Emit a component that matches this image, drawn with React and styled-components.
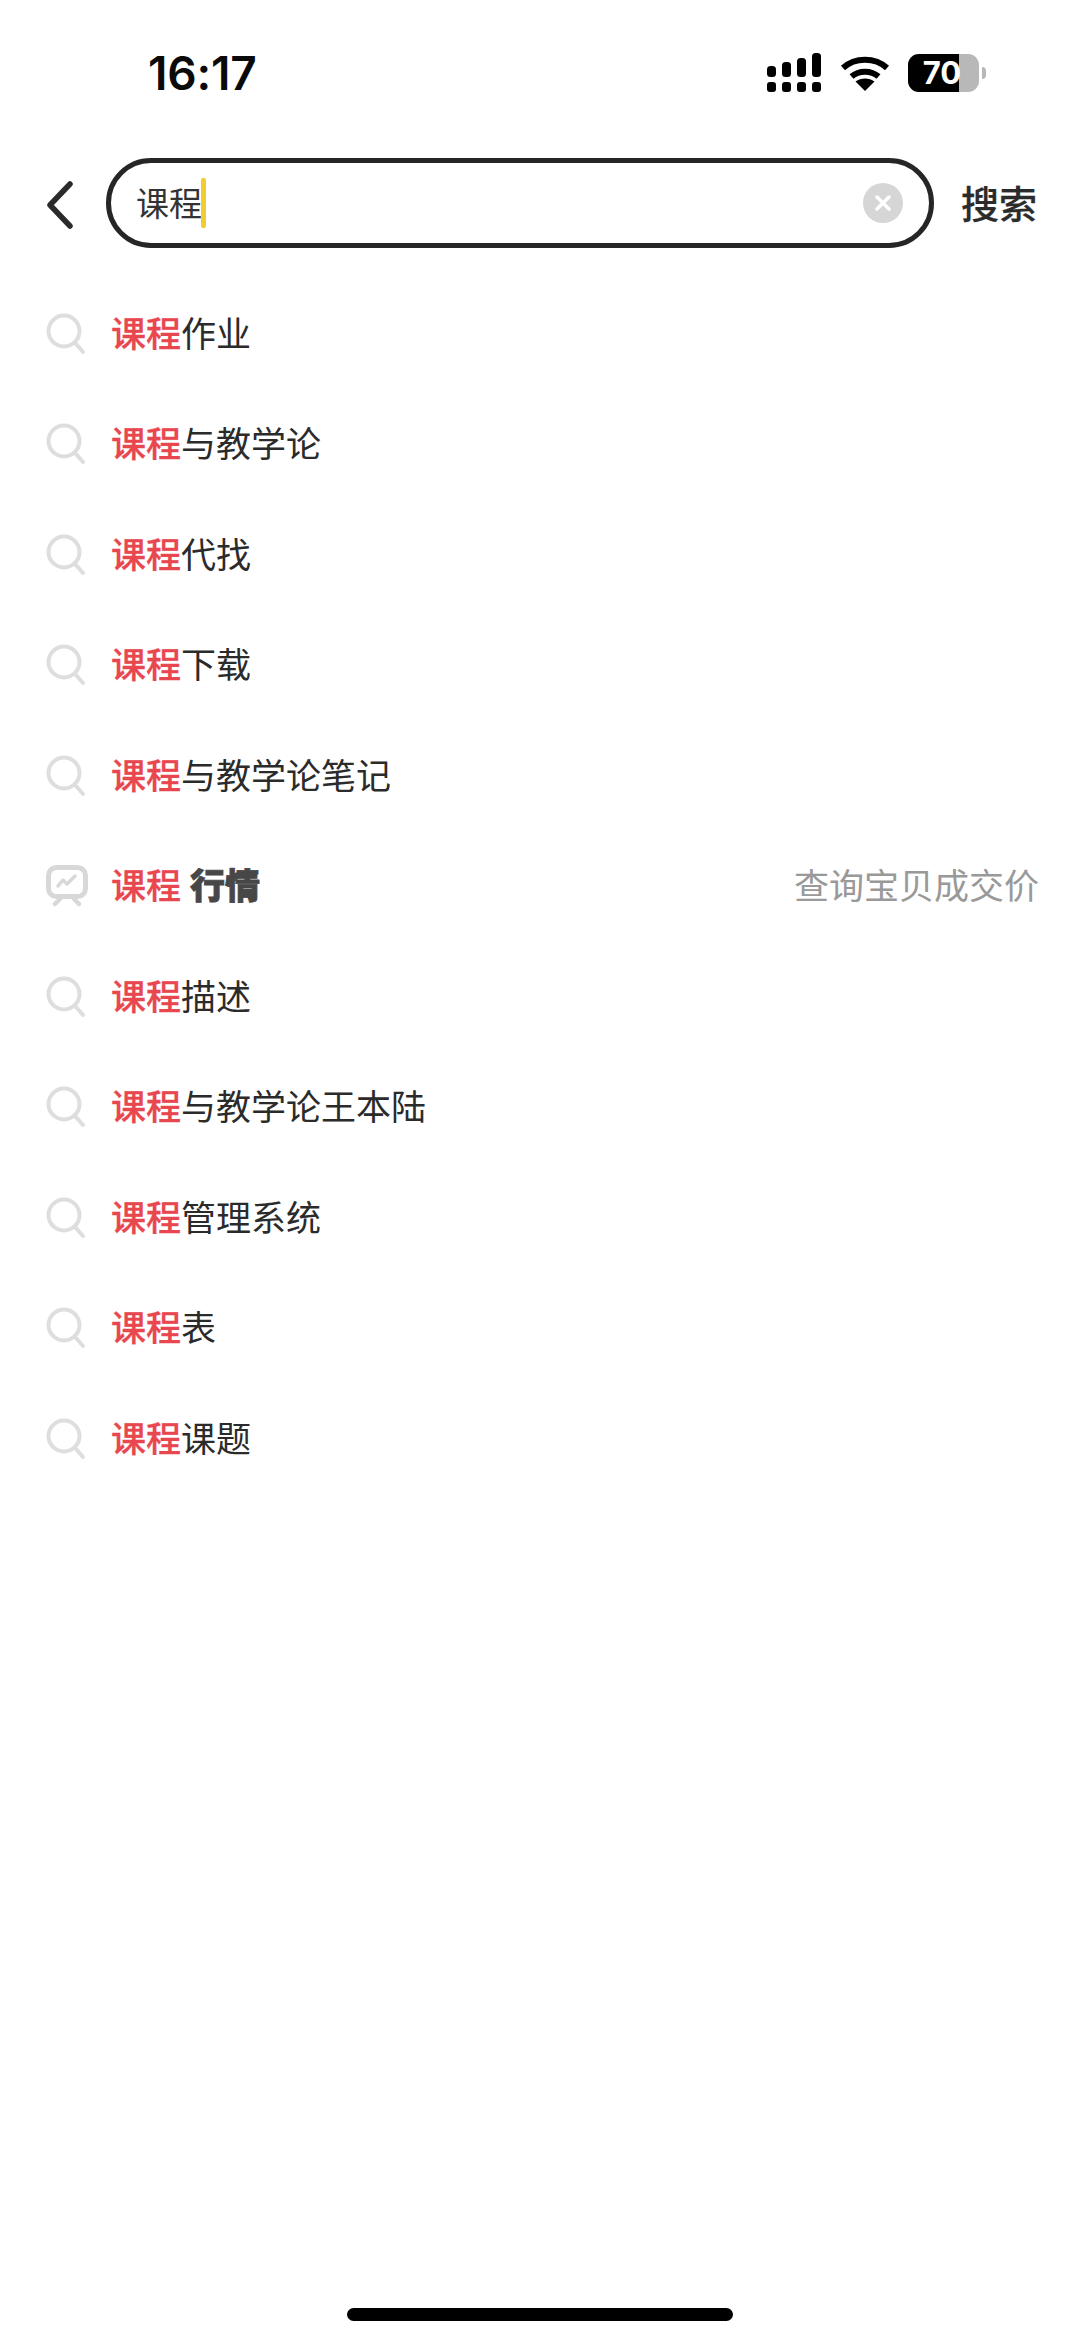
import React from "react"
import styled, {createGlobalStyle} from "styled-components"

const GlobalStyle = createGlobalStyle`
html, body {
  margin: 0;
  padding: 0;
  background: #fff;
}
`;

const Page = styled.div`
width: 1080px;
height: 2341px;
overflow: hidden;
display: flex;
flex-direction: column;
background: #fff;
font-family: "Noto Sans CJK SC", "Noto Sans", sans-serif;
color: #2b2b2b;
`;

const StatusBar = styled.div`
height: 158px;
flex: none;
box-sizing: border-box;
padding: 49px 94px 0 148px;
display: flex;
justify-content: space-between;
align-items: flex-start;
`;

const Time = styled.div`
font-family: "Inter", "Liberation Sans", sans-serif;
font-weight: 600;
font-size: 46px;
line-height: 48px;
letter-spacing: -0.2px;
color: #0a0a0a;
`;

const StatusIcons = styled.div`
display: flex;
align-items: center;
gap: 18px;
height: 40px;
margin-top: 4px;
`;

const Battery = styled.div`
display: flex;
align-items: center;
gap: 3px;
`;

const BatteryBody = styled.div`
position: relative;
width: 71px;
height: 38px;
border-radius: 11px;
overflow: hidden;
background: #b8b8b8;
`;

const BatteryFill = styled.div`
height: 100%;
background: #000;
`;

const BatteryText = styled.span`
position: absolute;
top: 0;
left: 0;
right: 0;
padding-right: 3px;
text-align: center;
font-family: "Inter", "Liberation Sans", sans-serif;
font-weight: 700;
font-size: 31px;
line-height: 38px;
color: #fff;
`;

const BatteryNub = styled.div`
width: 4px;
height: 12px;
border-radius: 0 4px 4px 0;
background: #b8b8b8;
`;

const SearchBar = styled.div`
height: 90px;
flex: none;
display: flex;
align-items: center;
padding-left: 47px;
`;

const BackButton = styled.div`
width: 59px;
flex: none;
display: flex;
align-items: center;
padding-top: 3px;
`;

const SearchBox = styled.div`
width: 828px;
height: 90px;
flex: none;
box-sizing: border-box;
border: 5px solid #262626;
border-radius: 45px;
display: flex;
align-items: center;
justify-content: space-between;
padding: 0 26px 0 25px;
`;

const Query = styled.div`
display: flex;
align-items: center;
font-size: 33px;
line-height: 50px;
color: #333;
`;

const QueryText = styled.span`
margin-top: -3px;
`;

const Caret = styled.span`
width: 5px;
height: 50px;
border-radius: 2px;
background: #f1cd2f;
margin-left: -1px;
`;

const ClearButton = styled.div`
width: 40px;
height: 40px;
border-radius: 50%;
background: #d6d6d6;
display: flex;
align-items: center;
justify-content: center;
`;

const SearchAction = styled.div`
margin-left: 27px;
font-size: 38px;
font-weight: 500;
line-height: 50px;
color: #2b2b2b;
white-space: nowrap;
padding-bottom: 2px;
-webkit-text-stroke: 0.25px #2b2b2b;
`;

const List = styled.div`
margin-top: 30px;
display: flex;
flex-direction: column;
`;

const Row = styled.div`
height: 110.5px;
flex: none;
box-sizing: border-box;
padding: 0 41px 0 46px;
display: flex;
align-items: center;
`;

const RowIcon = styled.div`
width: 66px;
margin-right: -1px;
flex: none;
display: flex;
align-items: center;
padding-top: 1px;
`;

const RowText = styled.div`
flex: 1;
font-size: 35px;
line-height: 50px;
color: #2b2b2b;
white-space: nowrap;
padding-bottom: 3px;
`;

const Match = styled.span`
color: #e8474f;
font-weight: 500;
-webkit-text-stroke: 0.3px #e8474f;
`;

const Tag = styled.span`
margin-left: 9px;
font-size: 35px;
font-weight: 900;
color: #474747;
-webkit-text-stroke: 0.8px #474747;
`;

const Hint = styled.div`
font-size: 35px;
line-height: 50px;
color: #999;
white-space: nowrap;
padding-bottom: 3px;
`;

const HomeBar = styled.div`
margin: auto auto 20px;
width: 386px;
height: 13px;
flex: none;
border-radius: 7px;
background: #000;
`;

const SignalIcon = () => (
    <svg width="56" height="40" viewBox="0 0 56 40" fill="#000">
        <rect x="1" y="13" width="9" height="11" rx="3.5" />
        <rect x="16" y="9" width="9" height="15" rx="3.5" />
        <rect x="31" y="5" width="9" height="19" rx="3.5" />
        <rect x="46" y="0" width="9" height="24" rx="3.5" />
        <rect x="1" y="29" width="9" height="10" rx="3" />
        <rect x="16" y="29" width="9" height="10" rx="3" />
        <rect x="31" y="29" width="9" height="10" rx="3" />
        <rect x="46" y="29" width="9" height="10" rx="3" />
    </svg>
)

const WifiIcon = () => (
    <svg width="50" height="36" viewBox="0 0 50 36" fill="none" stroke="#000" strokeWidth="6">
        <path d="M3 13 C15 2 35 2 47 13" />
        <path d="M11.5 21.5 C19 15 31 15 38.5 21.5" />
        <path d="M25 36 L15.5 26.5 C21 22.5 29 22.5 34.500 26.5 Z" fill="#000" stroke="none" />
    </svg>
)

const BackIcon = () => (
    <svg width="26" height="48" viewBox="0 0 26 48" fill="none" stroke="#2b2b2b" strokeWidth="5.500" strokeLinecap="round" strokeLinejoin="round">
        <path d="M23 3 L3 24 L23 45" />
    </svg>
)

const CloseIcon = () => (
    <svg width="16" height="16" viewBox="0 0 16 16" fill="none" stroke="#fff" strokeWidth="3.500" strokeLinecap="round">
        <path d="M2 2 L14 14 M14 2 L2 14" />
    </svg>
)

const SearchIcon = () => (
    <svg width="40" height="42" viewBox="0 0 40 42" fill="none" stroke="#dedede" strokeWidth="4" strokeLinecap="round">
        <circle cx="18" cy="18" r="15.500" />
        <path d="M30 31 L37 39" />
    </svg>
)

const ChartIcon = () => (
    <svg width="42" height="42" viewBox="0 0 42 42" fill="none" stroke="#d8d8d8" strokeLinecap="round" strokeLinejoin="round">
        <rect x="2.500" y="2.500" width="37" height="29" rx="8" strokeWidth="5" />
        <path d="M12 21 L17 15 L21 19 L29 11" strokeWidth="3.500" />
        <path d="M14 34 L9 39 M28 34 L33 39" strokeWidth="4.500" />
    </svg>
)

const suggestions = [
    {text: "作业"},
    {text: "与教学论"},
    {text: "代找"},
    {text: "下载"},
    {text: "与教学论笔记"},
    {tag: "行情", hint: "查询宝贝成交价"},
    {text: "描述"},
    {text: "与教学论王本陆"},
    {text: "管理系统"},
    {text: "表"},
    {text: "课题"},
]

export default function App() {
    return (
        <Page>
            <GlobalStyle />
            <StatusBar>
                <Time>16:17</Time>
                <StatusIcons>
                    <SignalIcon />
                    <WifiIcon />
                    <Battery>
                        <BatteryBody>
                            <BatteryFill style={{width: "72%"}} />
                            <BatteryText>70</BatteryText>
                        </BatteryBody>
                        <BatteryNub />
                    </Battery>
                </StatusIcons>
            </StatusBar>
            <SearchBar>
                <BackButton><BackIcon /></BackButton>
                <SearchBox>
                    <Query><QueryText>课程</QueryText><Caret /></Query>
                    <ClearButton><CloseIcon /></ClearButton>
                </SearchBox>
                <SearchAction>搜索</SearchAction>
            </SearchBar>
            <List>
                {suggestions.map((item, i) => (
                    <Row key={i}>
                        <RowIcon>{item.tag ? <ChartIcon /> : <SearchIcon />}</RowIcon>
                        <RowText>
                            <Match>课程</Match>
                            {item.text}
                            {item.tag && <Tag>{item.tag}</Tag>}
                        </RowText>
                        {item.hint && <Hint>{item.hint}</Hint>}
                    </Row>
                ))}
            </List>
            <HomeBar />
        </Page>
    )
}
